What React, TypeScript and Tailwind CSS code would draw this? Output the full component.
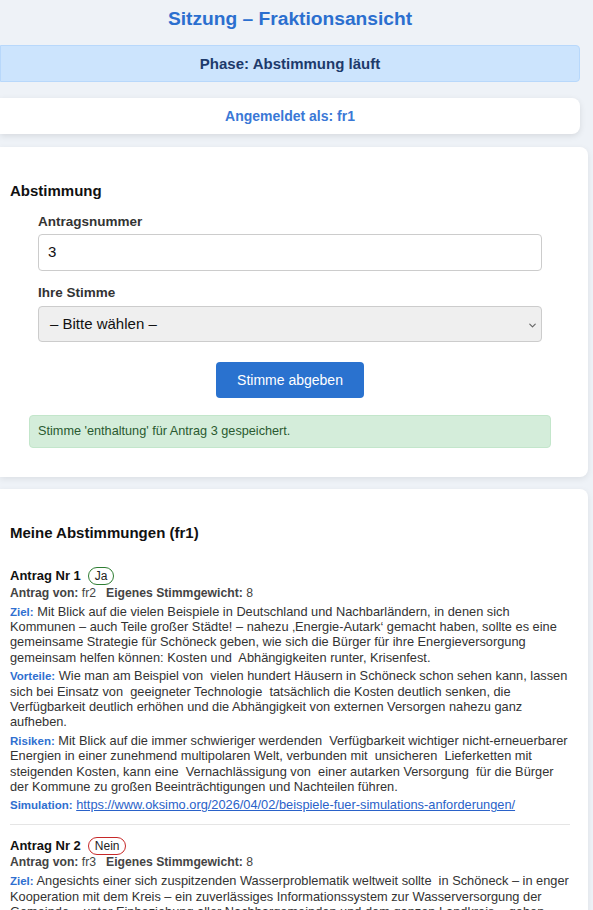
import { ChevronDown } from "lucide-react";

type Vote = {
  nr: number;
  stimme: "Ja" | "Nein";
  von: string;
  gewicht: number;
  ziel: string;
  vorteile?: string;
  risiken?: string;
  simulation?: string;
};

const votes: Vote[] = [
  {
    nr: 1,
    stimme: "Ja",
    von: "fr2",
    gewicht: 8,
    ziel:
      "Mit Blick auf die vielen Beispiele in Deutschland und Nachbarländern, in denen sich Kommunen – auch Teile großer Städte! – nahezu ‚Energie-Autark‘ gemacht haben, sollte es eine gemeinsame Strategie für Schöneck geben, wie sich die Bürger für ihre Energieversorgung gemeinsam helfen können: Kosten und  Abhängigkeiten runter, Krisenfest.",
    vorteile:
      "Wie man am Beispiel von  vielen hundert Häusern in Schöneck schon sehen kann, lassen sich bei Einsatz von  geeigneter Technologie  tatsächlich die Kosten deutlich senken, die Verfügbarkeit deutlich erhöhen und die Abhängigkeit von externen Versorgen nahezu ganz aufheben.",
    risiken:
      "Mit Blick auf die immer schwieriger werdenden  Verfügbarkeit wichtiger nicht-erneuerbarer Energien in einer zunehmend multipolaren Welt, verbunden mit  unsicheren  Lieferketten mit steigenden Kosten, kann eine  Vernachlässigung von  einer autarken Versorgung  für die Bürger der Kommune zu großen Beeinträchtigungen und Nachteilen führen.",
    simulation: "https://www.oksimo.org/2026/04/02/beispiele-fuer-simulations-anforderungen/",
  },
  {
    nr: 2,
    stimme: "Nein",
    von: "fr3",
    gewicht: 8,
    ziel:
      "Angesichts einer sich zuspitzenden Wasserproblematik weltweit sollte  in Schöneck – in enger Kooperation mit dem Kreis – ein zuverlässiges Informationssystem zur Wasserversorgung der Gemeinde – unter Einbeziehung aller Nachbargemeinden und dem ganzen Landkreis – geben.",
  },
];

function Field({ label, text }: { label: string; text: string }) {
  return (
    <p className="mt-[3px] whitespace-pre-wrap text-[12.8px] leading-[15.4px] text-[#333]">
      <span className="text-[11.5px] font-bold leading-[10px] text-[#2f6fd0]">{label}:</span> {text}
    </p>
  );
}

function VoteEntry({ v, last }: { v: Vote; last: boolean }) {
  const badge =
    v.stimme === "Ja"
      ? "border-[#2e7d32] text-[#222]"
      : "border-[#c62828] text-[#222]";
  return (
    <div className={last ? "pt-[11px]" : "pb-[11px] border-b border-[#e5e5e5]"}>
      <div className="flex items-center gap-[7px]">
        <span className="text-[13px] font-bold text-[#111]">Antrag Nr {v.nr}</span>
        <span className={`rounded-full border px-[6px] text-[12px] leading-[16px] ${badge}`}>
          {v.stimme}
        </span>
      </div>
      <div className="text-[12.2px] leading-[15px] text-[#444]">
        <b>Antrag von:</b> {v.von}
        <span className="ml-[10px]">
          <b>Eigenes Stimmgewicht:</b> {v.gewicht}
        </span>
      </div>
      <div className="mt-[3px]">
        <Field label="Ziel" text={v.ziel} />
        {v.vorteile && <Field label="Vorteile" text={v.vorteile} />}
        {v.risiken && <Field label="Risiken" text={v.risiken} />}
        {v.simulation && (
          <p className="mt-[3px] text-[12.8px] leading-[15.4px]">
            <span className="text-[11.5px] font-bold leading-[10px] text-[#2f6fd0]">Simulation:</span>{" "}
            <a href="#" className="text-[#2a62c9] underline">
              {v.simulation}
            </a>
          </p>
        )}
      </div>
    </div>
  );
}

export default function App() {
  return (
    <div className="min-h-screen w-[593px] overflow-hidden bg-[#eef2f7] font-['Liberation_Sans',Arial,sans-serif] text-[#222]">
      <h1 className="w-[580px] pt-[7px] text-center text-[19.2px] font-bold leading-[23px] text-[#2b6fcf]">
        Sitzung – Fraktionsansicht
      </h1>

      <div className="mt-[15px] w-[580px] rounded-r-[4px] border border-[#b8d8fb] bg-[#cce4fd] py-[9px] text-center text-[15px] font-bold leading-[17px] text-[#1d3a6b]">
        Phase: Abstimmung läuft
      </div>

      <div className="mt-[16px] w-[580px] rounded-r-[8px] bg-white py-[10px] text-center text-[14px] font-bold leading-[16px] text-[#3a78d6] shadow-[0_2px_6px_rgba(0,0,0,0.10)]">
        Angemeldet als: fr1
      </div>

      <section className="mt-[13px] w-[588px] rounded-r-[8px] bg-white pb-[29px] pl-[10px] pr-[18px] pt-[35px] shadow-[0_2px_6px_rgba(0,0,0,0.08)]">
        <h2 className="text-[15px] font-bold leading-[17px] text-[#111]">Abstimmung</h2>
        <div className="mx-[19px] mt-[15px]">
          <div className="px-[9px]">
            <label className="block text-[13.5px] font-bold leading-[16px] text-[#333]">
              Antragsnummer
            </label>
            <div className="mt-[4px] flex h-[37px] w-[504px] items-center rounded-[4px] border border-[#ccc] bg-white px-[9px] text-[15px] text-[#111]">
              3
            </div>
            <label className="mt-[14px] block text-[13.5px] font-bold leading-[16px] text-[#333]">
              Ihre Stimme
            </label>
            <div className="relative mt-[5px] flex h-[36px] w-[504px] items-center rounded-[4px] border border-[#ccc] bg-[#efefef] px-[11px] text-[15px] text-[#111]">
              – Bitte wählen –
              <ChevronDown className="absolute right-[3px] top-[13px] h-[11px] w-[11px] text-[#666]" strokeWidth={2.5} />
            </div>
          </div>
          <div className="mt-[20px] flex justify-center">
            <button className="h-[36px] w-[148px] rounded-[4px] bg-[#2a72cf] text-[14px] text-white">
              Stimme abgeben
            </button>
          </div>
          <div className="mt-[17px] rounded-[4px] border border-[#c3e6cb] bg-[#d4edda] px-[8px] py-[8px] text-[12.7px] leading-[15px] text-[#2a5a30]">
            Stimme 'enthaltung' für Antrag 3 gespeichert.
          </div>
        </div>
      </section>

      <section className="mt-[12px] w-[588px] rounded-r-[8px] bg-white pb-[20px] pl-[10px] pr-[18px] pt-[35px] shadow-[0_2px_6px_rgba(0,0,0,0.08)]">
        <h2 className="text-[15px] font-bold leading-[17px] text-[#111]">Meine Abstimmungen (fr1)</h2>
        <div className="mt-[25px]">
          {votes.map((v, i) => (
            <VoteEntry key={v.nr} v={v} last={i === votes.length - 1} />
          ))}
        </div>
      </section>
    </div>
  );
}
